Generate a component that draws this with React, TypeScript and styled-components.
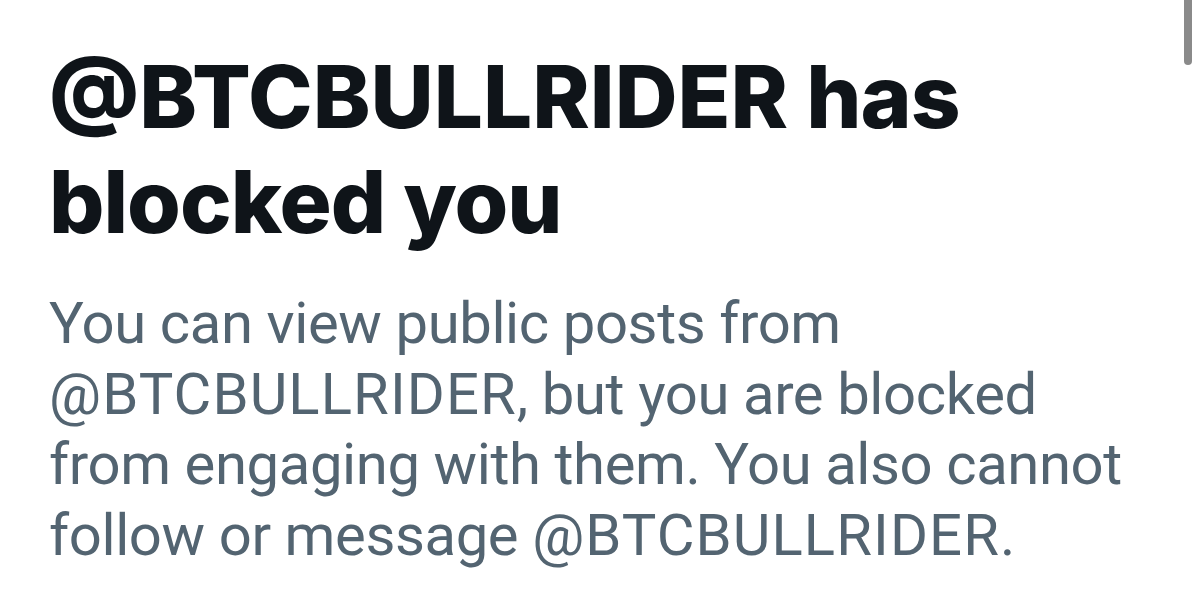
import React from 'react';
import styled, { createGlobalStyle } from 'styled-components';

const GlobalStyle = createGlobalStyle`
  html, body {
    margin: 0;
    padding: 0;
    background: #ffffff;
  }
  body {
    font-family: Roboto, "Liberation Sans", Arial, sans-serif;
    -webkit-font-smoothing: antialiased;
  }
`;

const Page = styled.div`
  position: relative;
  width: 1200px;
  height: 608px;
  overflow: hidden;
  background: #ffffff;
`;

const Content = styled.div`
  display: flex;
  flex-direction: column;
  padding: 44px 0 0 49px;
`;

const Title = styled.h1`
  margin: 0;
  font-family: Inter, "Liberation Sans", Arial, sans-serif;
  font-weight: 800;
  font-size: 87px;
  line-height: 105px;
  letter-spacing: -1px;
  color: #0f1419;
`;

const Body = styled.p`
  margin: 34px 0 0;
  font-family: Roboto, "Liberation Sans", Arial, sans-serif;
  font-weight: 400;
  font-size: 58px;
  line-height: 70.7px;
  letter-spacing: -0.4px;
  color: #536471;
`;

const Line = styled.span`
  display: block;
  white-space: nowrap;
`;

// the handle's capitals run a little wider than the lowercase around them
const Handle = styled.span<{ $spacing: number }>`
  letter-spacing: ${(p) => p.$spacing}px;
`;

const ScrollThumb = styled.div`
  position: absolute;
  top: 0;
  right: 8px;
  width: 8px;
  height: 65px;
  border-radius: 0 0 4px 4px;
  background: #8a8a8a;
`;

const handle = '@BTCBULLRIDER';

export default function App() {
  return (
    <>
      <GlobalStyle />
      <Page>
        <Content>
          <Title>
            <Line>
              <Handle $spacing={0}>{handle}</Handle> has
            </Line>
            <Line>blocked you</Line>
          </Title>
          <Body>
            <Line>You can view public posts from</Line>
            <Line>
              <Handle $spacing={1.1}>{handle}</Handle>, but you are blocked
            </Line>
            <Line>from engaging with them. You also cannot</Line>
            <Line>
              follow or message <Handle $spacing={1.1}>{handle}</Handle>.
            </Line>
          </Body>
        </Content>
        <ScrollThumb />
      </Page>
    </>
  );
}
